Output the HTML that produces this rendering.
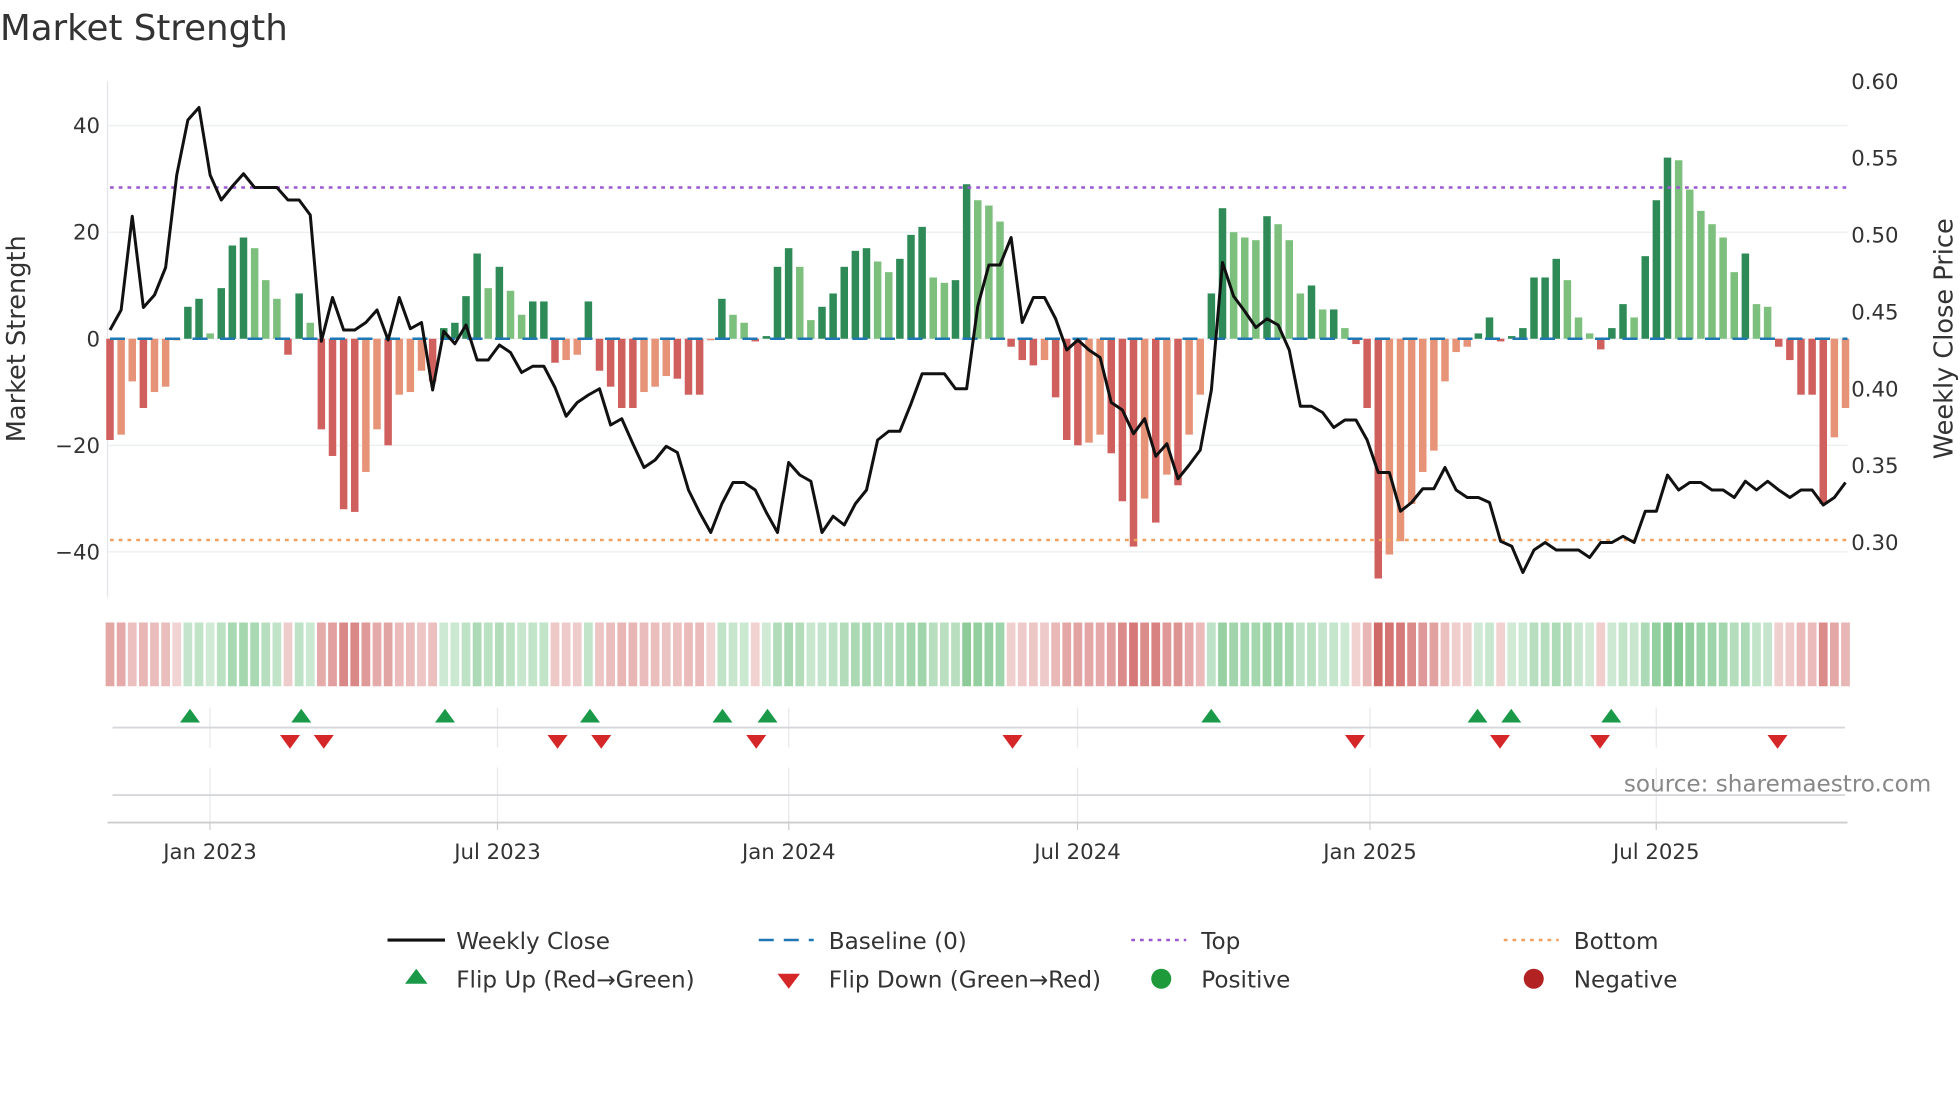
<!DOCTYPE html>
<html><head><meta charset="utf-8"><style>
html,body{margin:0;padding:0;background:#fff;width:1960px;height:1102px;overflow:hidden}
svg{display:block;font-family:"DejaVu Sans","Liberation Sans",sans-serif}
</style></head><body>
<svg id="s" width="1960" height="1102" viewBox="0 0 1960 1102" xmlns="http://www.w3.org/2000/svg">
<g id="g" transform="scale(1.25)">
<text x="0" y="32" font-size="28.5" fill="#333">Market Strength</text>
</g>
</svg>
<script>
var S=[-19,-18,-8,-13,-10,-9,-0.3,6,7.5,1,9.5,17.5,19,17,11,7.5,-3,8.5,3,-17,-22,-32,-32.5,-25,-17,-20,-10.5,-10,-6,-8,2,3,8,16,9.5,13.5,9,4.5,7,7,-4.5,-4,-3,7,-6,-9,-13,-13,-10,-9,-7,-7.5,-10.5,-10.5,-0.3,7.5,4.5,3,-0.5,0.5,13.5,17,13.5,3.5,6,8.5,13.5,16.5,17,14.5,12.5,15,19.5,21,11.5,10.5,11,29,26,25,22,-1.5,-4,-5,-4,-11,-19,-20,-19.5,-18,-21.5,-30.5,-39,-30,-34.5,-25.5,-27.5,-18,-10.5,8.5,24.5,20,19,18.5,23,21.5,18.5,8.5,10,5.5,5.5,2,-1,-13,-45,-40.5,-38,-31,-25,-21,-8,-2.5,-1.5,1,4,-0.5,0.5,2,11.5,11.5,15,11,4,1,-2,2,6.5,4,15.5,26,34,33.5,28,24,21.5,19,12.5,16,6.5,6,-1.5,-4,-10.5,-10.5,-31,-18.5,-13];
var P=[264,248,173,246,236,214,140,96,86,140,160,149,139,150,150,150,160,160,172,273,238,264,264,258,248,272,238,263,258,312,265,275,260,288,288,276,282,298,293,293,310,333,322,316,311,340,335,355,374,368,357,362,392,410,426,403,386,386,392,410,426,370,380,385,426,413,420,403,392,352,345,345,323,299,299,299,311,311,245,212,212,190,258,238,238,255,280,272,280,286,322,328,347,335,365,355,383,372,360,312,210,237,249,262,255,260,280,325,325,330,342,336,336,352,378,378,409,402,391,391,374,392,398,398,402,433,437,458,440,434,440,440,440,446,434,434,429,434,409,409,380,392,386,386,392,392,398,385,392,385,392,398,392,392,404,398,386];
var h='';
function X(i){return 88+i*8.9}
function Y(v){return 271-v*4.2625}
h+='<line x1="86" y1="65" x2="86" y2="478" stroke="#e3e6ea" stroke-width="1"/>';
[40,20,0,-20,-40].forEach(function(v){var y=Y(v);h+='<line x1="86" y1="'+y+'" x2="1478" y2="'+y+'" stroke="#edf0f3" stroke-width="1.2"/>';
h+='<text x="80" y="'+(y+6)+'" font-size="17" fill="#333" text-anchor="end">'+(v<0?'\u2212'+(-v):v)+'</text>';});
[0.60,0.55,0.50,0.45,0.40,0.35,0.30].forEach(function(p){var y=434-(p-0.3)*1230;h+='<text x="1481" y="'+(y+6)+'" font-size="17" fill="#333">'+p.toFixed(2)+'</text>';});
h+='<text transform="translate(20,271) rotate(-90)" font-size="20.5" fill="#333" text-anchor="middle">Market Strength</text>';
h+='<text transform="translate(1562,271) rotate(-90)" font-size="20.5" fill="#333" text-anchor="middle">Weekly Close Price</text>';
for(var i=0;i<S.length;i++){var v=S[i],pv=i?S[i-1]:0,c;
if(v>=0)c=(v>=pv)?'#2e8b57':'#7dbf7d';else c=(v<=pv)?'#d0605e':'#e69377';
var y0=Y(0),y1=Y(v);h+='<rect x="'+(X(i)-3)+'" y="'+Math.min(y0,y1)+'" width="6" height="'+Math.max(Math.abs(y1-y0),0.8)+'" fill="'+c+'"/>';
var a=0.25+0.6*Math.min(Math.abs(v),45)/45;
h+='<rect x="'+(X(i)-3.5)+'" y="498" width="7" height="51" fill="'+(v>=0?'#4caf60':'#c8504e')+'" fill-opacity="'+a.toFixed(2)+'"/>';}
h+='<line x1="88" y1="271" x2="1478" y2="271" stroke="#1f77b4" stroke-width="2" stroke-dasharray="12,10"/>';
h+='<line x1="88" y1="150" x2="1478" y2="150" stroke="#9b59d0" stroke-width="2" stroke-dasharray="3,4"/>';
h+='<line x1="88" y1="432" x2="1478" y2="432" stroke="#f0a060" stroke-width="2" stroke-dasharray="3,4"/>';
var pts=P.map(function(y,i){return X(i)+','+y}).join(' ');
h+='<polyline points="'+pts+'" fill="none" stroke="#111" stroke-width="2.4" stroke-linejoin="round"/>';
[168,398,631,862,1096,1325].forEach(function(x){h+='<line x1="'+x+'" y1="566" x2="'+x+'" y2="598" stroke="#e6e8ea"/><line x1="'+x+'" y1="614" x2="'+x+'" y2="658" stroke="#e6e8ea"/>';});
h+='<line x1="90" y1="582" x2="1476" y2="582" stroke="#d5d7da" stroke-width="1.5"/>';
h+='<line x1="90" y1="636" x2="1476" y2="636" stroke="#d5d7da" stroke-width="1.5"/>';
h+='<line x1="86" y1="658" x2="1478" y2="658" stroke="#ccc" stroke-width="1.5"/>';
[[168,'Jan 2023'],[398,'Jul 2023'],[631,'Jan 2024'],[862,'Jul 2024'],[1096,'Jan 2025'],[1325,'Jul 2025']].forEach(function(t){
h+='<line x1="'+t[0]+'" y1="658" x2="'+t[0]+'" y2="664" stroke="#ccc"/><text x="'+t[0]+'" y="687" font-size="17" fill="#333" text-anchor="middle">'+t[1]+'</text>';});
[152,241,356,472,578,614,969,1182,1209,1289].forEach(function(x){h+='<path d="M'+(x-8)+' 578 L'+(x+8)+' 578 L'+x+' 567 Z" fill="#1a9a48"/>';});
[232,259,446,481,605,810,1084,1200,1280,1422].forEach(function(x){h+='<path d="M'+(x-8)+' 588 L'+(x+8)+' 588 L'+x+' 599 Z" fill="#d62728"/>';});
h+='<text x="1545" y="633" font-size="18.5" fill="#888" text-anchor="end">source: sharemaestro.com</text>';
function T(x,y,s){h+='<text x="'+x+'" y="'+(y+7)+'" font-size="18.5" fill="#333">'+s+'</text>';}
h+='<line x1="310" y1="752" x2="356" y2="752" stroke="#111" stroke-width="2.5"/>';T(365,752,'Weekly Close');
h+='<line x1="607" y1="752" x2="651" y2="752" stroke="#1f77b4" stroke-width="2" stroke-dasharray="12,8"/>';T(663,752,'Baseline (0)');
h+='<line x1="905" y1="752" x2="949" y2="752" stroke="#9b59d0" stroke-width="2" stroke-dasharray="3,4"/>';T(961,752,'Top');
h+='<line x1="1203" y1="752" x2="1247" y2="752" stroke="#f0a060" stroke-width="2" stroke-dasharray="3,4"/>';T(1259,752,'Bottom');
h+='<path d="M324 787 L342 787 L333 775 Z" fill="#1a9a48"/>';T(365,783,'Flip Up (Red\u2192Green)');
h+='<path d="M622 779 L640 779 L631 791 Z" fill="#d62728"/>';T(663,783,'Flip Down (Green\u2192Red)');
h+='<circle cx="929" cy="783" r="8" fill="#1f9a3a"/>';T(961,783,'Positive');
h+='<circle cx="1227" cy="783" r="8" fill="#b22222"/>';T(1259,783,'Negative');
document.getElementById('g').insertAdjacentHTML('beforeend',h);
</script>
</body></html>
